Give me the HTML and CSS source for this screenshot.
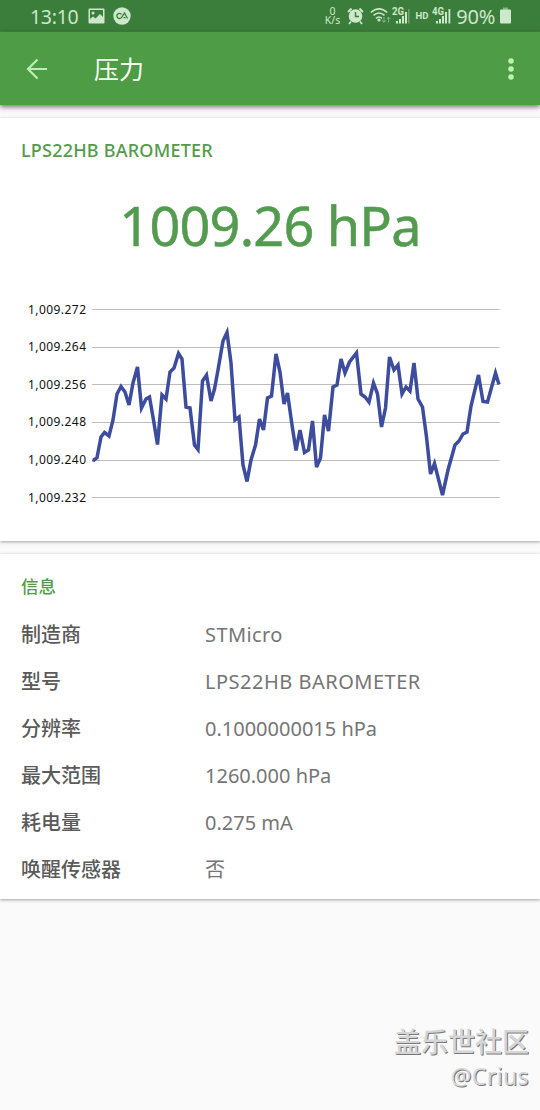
FILE: index.html
```html
<!DOCTYPE html>
<html lang="zh-CN">
<head>
<meta charset="utf-8">
<title>压力</title>
<link rel="stylesheet" href="styles.css">
</head>
<body>
<div class="screen">
  <header class="status">
    <span class="clock">13:10</span>
    <svg class="ico-image" width="17" height="16" viewBox="0 0 17 16"><path fill="currentColor" fill-rule="evenodd" d="M1.5.5h14a1 1 0 0 1 1 1v13a1 1 0 0 1-1 1h-14a1 1 0 0 1-1-1v-13a1 1 0 0 1 1-1zM2 2v9l3-2.5 2.500 2L12 6l3 3V2zM5 3.500a1.500 1.500 0 1 1 0 3 1.500 1.500 0 0 1 0-3z"/></svg>
    <svg class="ico-ca" width="18" height="18" viewBox="0 0 18 18"><circle cx="9" cy="9" r="8.700" fill="currentColor"/><path d="M8.500 7.300A2.600 2.600 0 1 0 8.400 10.600L11.500 6l3 5.500M10.500 10.700h2" fill="none" stroke="#3b7d3a" stroke-width="1.300"/></svg>
    <span class="rate">0<br>K/s</span>
    <svg class="ico-alarm" width="17" height="18" viewBox="0 0 17 18"><circle cx="8.500" cy="9" r="6.800" fill="currentColor"/><path d="M1 5L4.500 1.500M16 5l-3.500-3.500M4 14.500L2 17M13 14.500l2 2.500" stroke="currentColor" stroke-width="1.800"/><path d="M8.500 5v4.500H12" fill="none" stroke="#3b7d3a" stroke-width="1.500"/></svg>
    <svg class="ico-wifi" width="21" height="18" viewBox="0 0 21 18"><g fill="none" stroke="currentColor" stroke-width="1.600"><path d="M.8 5.500Q9 -1.800 17.200 5.500M3.500 8.400Q9 3.600 14.500 8.400M6 11.300Q9 8.700 12 11.300"/></g><circle cx="9" cy="13" r="1.600" fill="currentColor"/><g stroke="currentColor" fill="none" opacity=".5"><path d="M14 10v5M12.200 13.500L14 15.300l1.800-1.800M18.500 15.500v-5M16.700 12l1.800-1.800L20.300 12"/></g></svg>
    <svg class="ico-sig" width="19" height="18" viewBox="0 0 19 18"><text x="0" y="8" class="gen" textLength="12" lengthAdjust="spacingAndGlyphs">2G</text><path fill="currentColor" d="M4 14h2v2.500h-2zM7 12h2v4.500h-2zM10 9h2v7.500h-2zM13 5h2v11.500h-2z"/><path fill="currentColor" opacity=".35" d="M16 2h1.500v14.500h-1.500z"/></svg>
    <span class="hd">HD</span>
    <svg class="ico-sig4" width="19" height="18" viewBox="0 0 19 18"><text x="0" y="8" class="gen" textLength="12" lengthAdjust="spacingAndGlyphs">4G</text><path fill="currentColor" d="M4 14h2v2.500h-2zM7 12h2v4.500h-2zM10 9h2v7.500h-2zM13 5h2v11.500h-2zM16.500 2h1.800v14.500h-1.800z"/></svg>
    <span class="pct">90%</span>
    <svg class="ico-batt" width="11" height="17" viewBox="0 0 11 17"><path fill="currentColor" opacity=".5" d="M3 .5h5V3H3z"/><rect y="2.500" width="11" height="14" rx="1" fill="currentColor"/></svg>
  </header>
  <nav class="appbar">
    <svg class="back" width="22" height="22" viewBox="0 0 22 22"><path d="M21 11H2M11.500 1.500L2 11l9.500 9.500" fill="none" stroke="currentColor" stroke-width="2.200"/></svg>
    <h1 class="title">压力</h1>
    <svg class="more" width="6" height="22" viewBox="0 0 6 22"><g fill="currentColor"><circle cx="3" cy="3" r="2.800"/><circle cx="3" cy="11" r="2.800"/><circle cx="3" cy="19" r="2.800"/></g></svg>
  </nav>
  <main>
    <section class="card reading">
      <h2 class="sensor">LPS22HB BAROMETER</h2>
      <p class="value">1009.26 hPa</p>
      <svg class="chart" width="540" height="220" viewBox="0 290 540 220">
        <path d="M92 309.500H499.500M92 347.500H499.500M92 384.500H499.500M92 422.500H499.500M92 460.500H499.500M92 497.500H499.500" stroke="#bdbdbd"/>
        <g class="axis">
          <text x="28" y="313.500" textLength="58">1,009.272</text>
          <text x="28" y="351" textLength="58">1,009.264</text>
          <text x="28" y="388.500" textLength="58">1,009.256</text>
          <text x="28" y="426" textLength="58">1,009.248</text>
          <text x="28" y="464" textLength="58">1,009.240</text>
          <text x="28" y="501.500" textLength="58">1,009.232</text>
        </g>
        <polyline class="trace" points="92.500,459.500 94,460 97,457.500 101,437 104.500,432.500 109,436 113,420 117,394 121,386.500 125,392 129,405 133,383 137.500,367 141.500,408 146,399 149.500,397 153.500,420 157.500,444.500 162,395 166,399 170,372 174,368 178.500,353.500 182,359 186,407 190,408 194.500,445 198,449.500 202.500,381 206.500,375 211,401 214.500,389 218,370 223,341 227,332.500 231,363 235,420 239,417 243,465 247,481.500 251,460 255.500,445 259.500,419 263.500,430 267.500,398 271.500,396 276,354 280,372 284,404 287.500,393 292,425 296,450.500 300,430 304.500,452.500 308.500,450 312.500,421 316.500,467 320.500,458 324.500,415 328.500,431 333,387 337,385 341,359 345,373 349.500,362 356.500,353 361,394 365,397 369,402 373.500,383 377.500,394 381.500,427 385.500,408 389.500,357 394,370 398,365 402,394 406,387 410,391 414,363 418,399 422.500,407 426.500,437 430.500,474 434.500,463.500 442.500,495 448,470 455,445 459,441 463,434 467,432 471,406 478.500,375 483,401.500 487.500,402 495.500,373 499,384.500"/>
      </svg>
    </section>
    <section class="card info">
      <h2 class="heading">信息</h2>
      <dl class="rows">
        <dt>制造商</dt><dd class="maker">STMicro</dd>
        <dt>型号</dt><dd class="model">LPS22HB BAROMETER</dd>
        <dt>分辨率</dt><dd>0.1000000015 hPa</dd>
        <dt>最大范围</dt><dd>1260.000 hPa</dd>
        <dt>耗电量</dt><dd>0.275 mA</dd>
        <dt>唤醒传感器</dt><dd>否</dd>
      </dl>
    </section>
  </main>
  <footer class="mark"><span class="community">盖乐世社区</span><span class="author">@Crius</span></footer>
</div>
</body>
</html>
```
FILE: styles.css
```css
* { box-sizing: border-box; margin: 0; padding: 0; }
body { font-family: "Noto Sans", "Noto Sans CJK SC", sans-serif; background: #fafafa; }
.screen { width: 540px; height: 1110px; display: flex; flex-direction: column; overflow: hidden; }
svg { display: block; flex: none; }
.status { height: 32px; flex: none; display: flex; align-items: center; background: #3b7d3a; color: #cde8cb; padding: 0 29px 0 30px; white-space: nowrap; border-bottom: 1px solid #438541; }
.clock { width: 49px; font-size: 19.500px; line-height: 32px; letter-spacing: -.3px; padding-top: 2px; }
.ico-image { margin-left: 9px; }
.ico-ca { margin-left: 8px; }
.rate { width: 16px; margin-left: 194px; text-align: center; font-size: 10.500px; line-height: 9.500px; padding-top: 1px; }
.ico-alarm { margin-left: 7px; }
.ico-wifi { margin-left: 6px; }
.ico-sig { margin-left: 1px; }
.gen { font: 700 10px Roboto, sans-serif; fill: currentColor; }
.hd { width: 14px; margin-left: 4px; font: 700 9.500px Roboto, sans-serif; }
.ico-sig4 { margin-left: 3px; }
.pct { width: 41px; margin-left: 5px; font-size: 20px; letter-spacing: -.2px; line-height: 32px; padding-top: 2px; }
.ico-batt { margin-left: 3px; }
.appbar { height: 73px; flex: none; display: flex; align-items: center; background: #4e9c45; padding: 0 26px; position: relative; box-shadow: 0 2px 5px rgba(0,0,0,.55); }
.back { color: #bdeeb7; }
.title { margin-left: 46px; flex: 1; font-size: 25px; font-weight: 400; line-height: 36px; color: #f5fff2; }
.more { color: #bdf2b5; }
main { padding-top: 13px; display: flex; flex-direction: column; gap: 13px; }
.card { background: #fff; box-shadow: 0 1px 3px rgba(0,0,0,.36); }
.reading { height: 423px; }
.sensor { padding: 20px 21px 0; font-size: 18px; letter-spacing: .22px; line-height: 25px; font-weight: 500; color: #539b4a; }
.value { padding-top: 23px; text-align: center; font-size: 54px; letter-spacing: -.8px; line-height: 78px; height: 102px; color: #539b4f; -webkit-text-stroke: .5px #539b4f; }
.chart { margin-top: 25px; }
.axis { font-size: 12px; fill: #111; }
.trace { fill: none; stroke: #3d4c9d; stroke-width: 3.500; }
.info { height: 345px; padding: 20px 21px 0; }
.heading { font-size: 17.500px; line-height: 24px; font-weight: 500; color: #539b4a; }
.rows { padding-top: 13px; display: grid; grid-template-columns: 184px 1fr; grid-auto-rows: 47px; line-height: 47px; font-size: 20px; }
.rows dt { font-weight: 500; color: #5a5a5a; }
.rows dd { color: #757575; }
.rows .maker { letter-spacing: .4px; }
.rows .model { letter-spacing: .5px; }
.mark { flex: 1; display: flex; flex-direction: column; align-items: flex-end; justify-content: flex-end; padding: 0 11px 18px; color: #d6d6d6; text-shadow: 1px 1px 0 #777; }
.community { font-size: 27px; line-height: 37px; font-weight: 500; }
.author { font-size: 23px; letter-spacing: .4px; line-height: 32px; }
```
